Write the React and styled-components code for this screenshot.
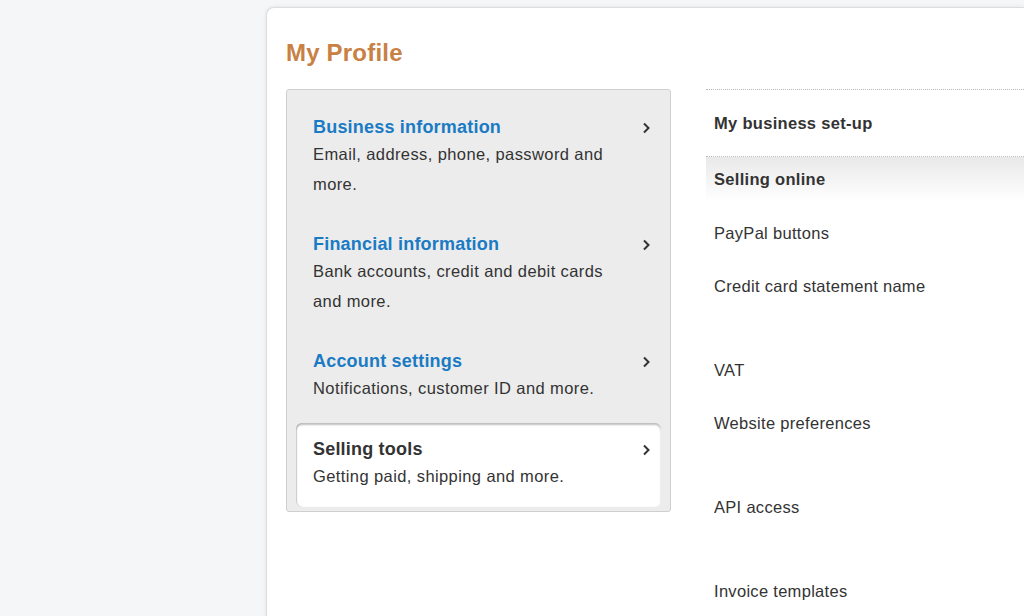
import React from 'react';
import styled, { createGlobalStyle } from 'styled-components';

const Global = createGlobalStyle`
  html, body { margin: 0; padding: 0; background: #f5f6f8; height: 616px; overflow: hidden; }
  body { font-family: "Liberation Sans", Arial, sans-serif; color: #333; }
`;

const Page = styled.div`
  padding: 7px 0 0 266px;
`;

const Card = styled.div`
  background: #fff;
  border: 1px solid #ddd;
  border-right: none;
  border-radius: 8px 0 0 0;
  box-shadow: 0 0 4px rgba(0,0,0,0.08);
  height: 620px;
  padding: 31px 0 0 19px;
  box-sizing: border-box;
`;

const Title = styled.h1`
  margin: 0 0 22px;
  font-size: 24px;
  font-weight: bold;
  color: #c98043;
  line-height: 28px;
  letter-spacing: 0.2px;
`;

const Columns = styled.div`
  display: flex;
  gap: 35px;
`;

const Menu = styled.div`
  width: 385px;
  height: 423px;
  box-sizing: border-box;
  background: #ececec;
  border: 1px solid #cfcfcf;
  border-radius: 3px;
  padding: 12px 9px 0;
`;

const Item = styled.div`
  position: relative;
  padding: 13px 28px 0 17px;
  height: ${p => p.$h}px;
  box-sizing: border-box;
  border-radius: 6px;
  ${p => p.$active && `
    background: #fff;
    box-shadow: inset 0 2px 2px rgba(0,0,0,0.25), inset 1px 0 1px rgba(0,0,0,0.15);
    padding-top: 14px;
  `}
`;

const ItemTitle = styled.div`
  font-size: 18px;
  font-weight: bold;
  line-height: 24px;
  letter-spacing: 0.2px;
  color: ${p => (p.$active ? '#333' : '#1a7bc4')};
`;

const ItemDesc = styled.div`
  font-size: 16.5px;
  letter-spacing: 0.4px;
  line-height: 30px;
  color: #333;
`;

const Chevron = styled.svg`
  position: absolute;
  right: 10px;
  top: ${p => (p.$active ? 21 : 20)}px;
`;

const Side = styled.div`
  flex: 1;
`;

const SideHead = styled.div`
  border-top: 1px dotted #bbb;
  border-bottom: 1px dotted #bbb;
  height: 66px;
  display: flex;
  align-items: center;
  font-size: 16.5px;
  font-weight: bold;
  letter-spacing: 0.3px;
  color: #333;
  padding-left: 8px;
`;

const SideSection = styled.div`
  height: 44px;
  display: flex;
  align-items: center;
  padding-left: 8px;
  font-size: 16.5px;
  font-weight: bold;
  letter-spacing: 0.3px;
  background: linear-gradient(#e9e9e9, #fff);
`;

const SideLink = styled.div`
  font-size: 16.5px;
  letter-spacing: 0.3px;
  line-height: 20px;
  padding-left: 8px;
  height: ${p => p.$h}px;
  padding-top: ${p => p.$t || 0}px;
  box-sizing: border-box;
  color: #333;
`;

const items = [
  { t: 'Business information', d: 'Email, address, phone, password and more.', h: 117 },
  { t: 'Financial information', d: 'Bank accounts, credit and debit cards and more.', h: 117 },
  { t: 'Account settings', d: 'Notifications, customer ID and more.', h: 87 },
  { t: 'Selling tools', d: 'Getting paid, shipping and more.', h: 84, active: true },
];

const links = [
  ['PayPal buttons', 75, 22],
  ['Credit card statement name', 84],
  ['VAT', 53],
  ['Website preferences', 84],
  ['API access', 84],
  ['Invoice templates', 84],
];

export default function App() {
  return (
    <Page>
      <Global />
      <Card>
        <Title>My Profile</Title>
        <Columns>
          <Menu>
            {items.map(i => (
              <Item key={i.t} $h={i.h} $active={i.active}>
                <ItemTitle $active={i.active}>{i.t}</ItemTitle>
                <ItemDesc>{i.d}</ItemDesc>
                <Chevron $active={i.active} width="9" height="12" viewBox="0 0 9 12">
                  <path d="M2 1.5 L6.5 6 L2 10.5" fill="none" stroke="#333" strokeWidth="2" />
                </Chevron>
              </Item>
            ))}
          </Menu>
          <Side>
            <SideHead>My business set-up</SideHead>
            <SideSection>Selling online</SideSection>
            {links.map(([l, h, t]) => (
              <SideLink key={l} $h={h} $t={t}>{l}</SideLink>
            ))}
          </Side>
        </Columns>
      </Card>
    </Page>
  );
}
